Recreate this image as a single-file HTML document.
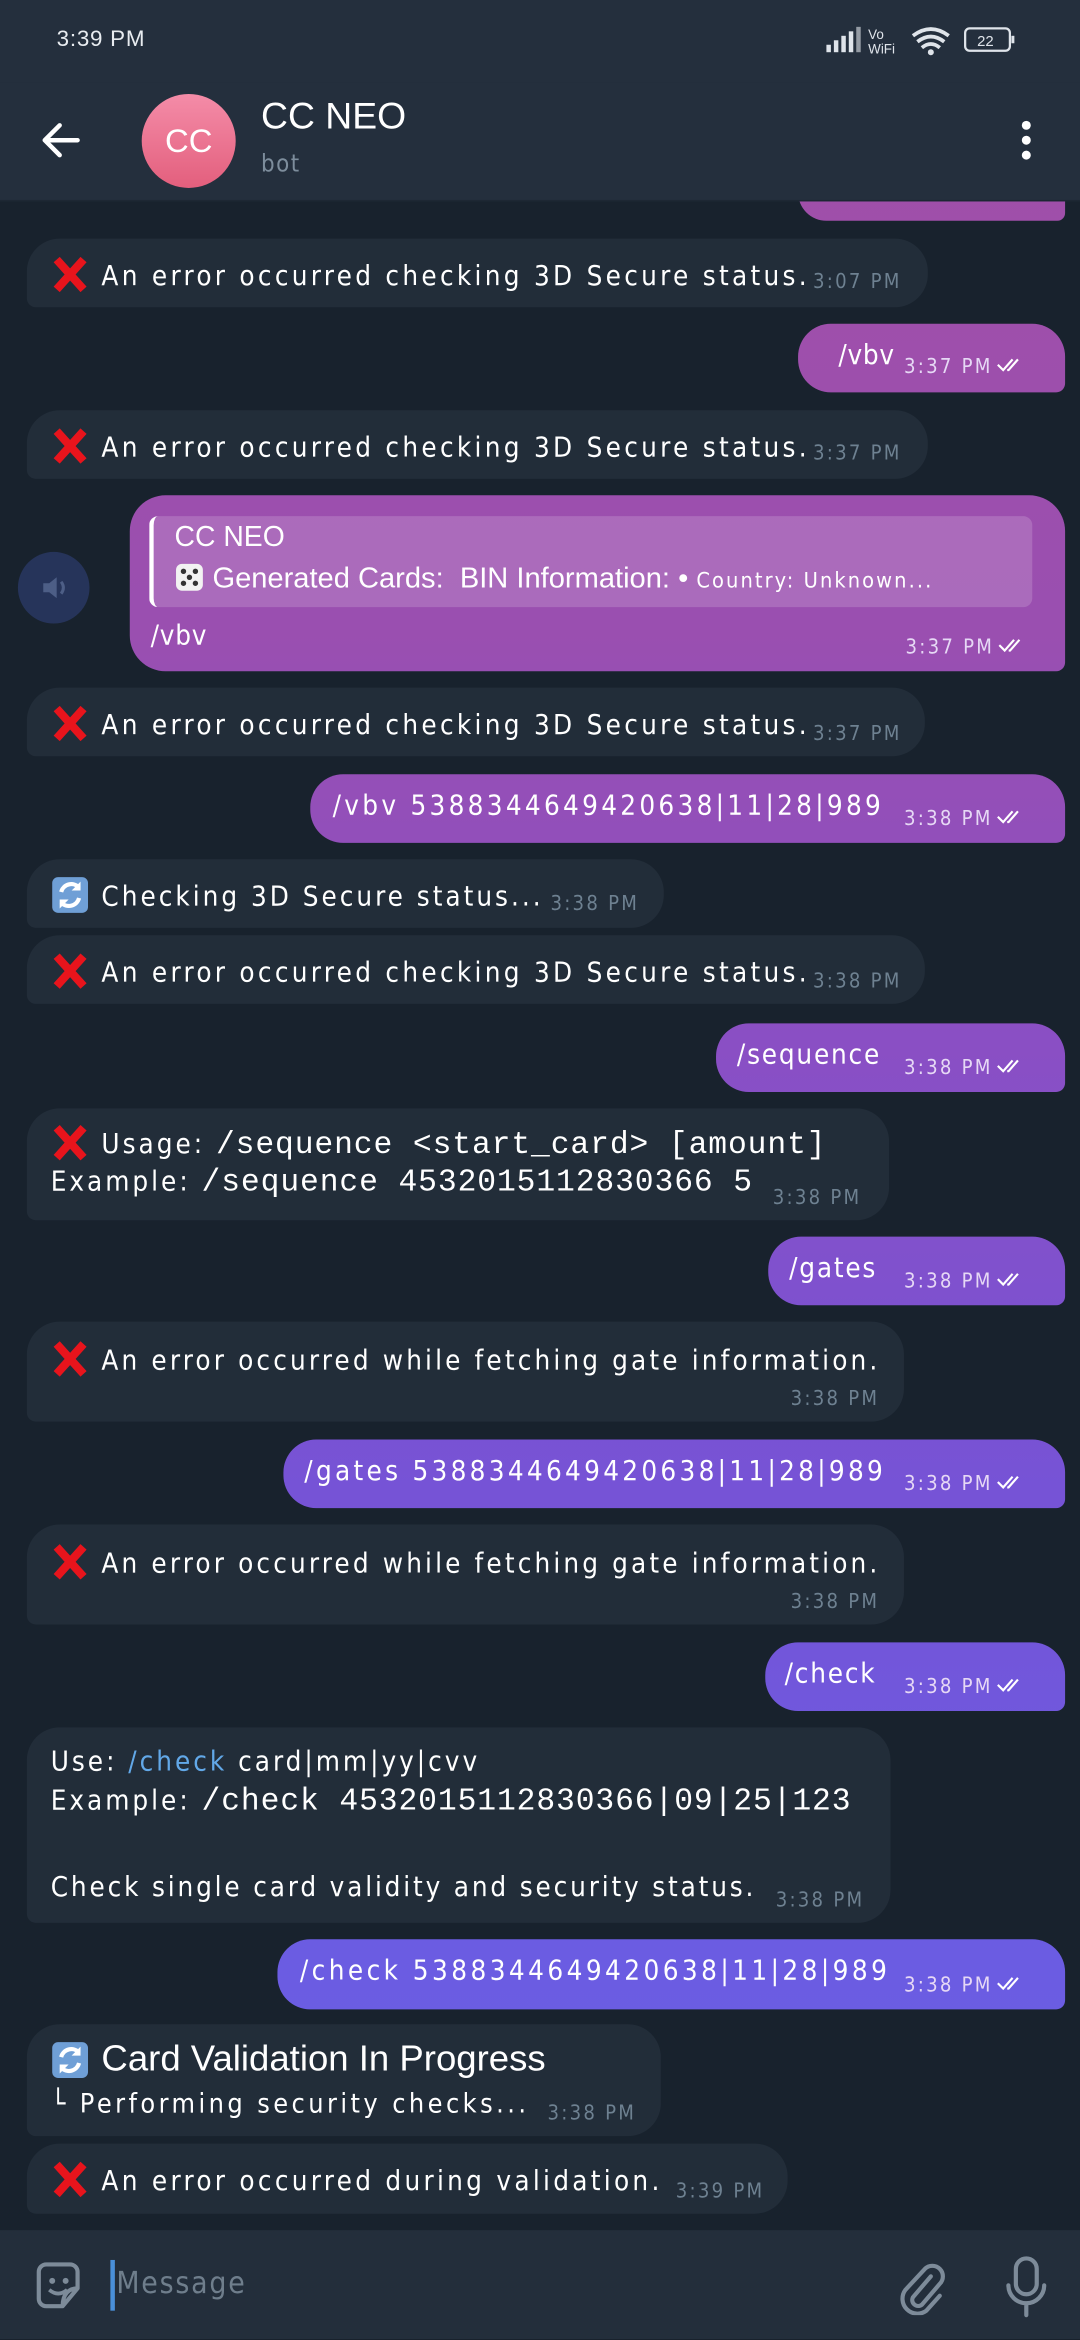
<!DOCTYPE html>
<html><head><meta charset="utf-8"><style>
*{margin:0;padding:0;box-sizing:border-box}
html,body{width:1080px;height:2340px;overflow:hidden;background:#18222d}
#w{position:absolute;left:0;top:0;width:724px;height:1568px;transform:scale(1.49172);transform-origin:0 0;font-family:"DejaVu Sans Condensed","Liberation Sans Narrow","Liberation Sans",sans-serif;color:#fff;background:#18222d}
.sb{position:absolute;left:0;top:0;width:724px;height:55px;background:#242f3d}
.hd{position:absolute;left:0;top:55px;width:724px;height:80px;background:#242f3d}
.b{position:absolute;height:46px;border-radius:22px;font-size:18.5px;letter-spacing:2px;white-space:nowrap}
.i{background:#222d39;left:18px;border-bottom-left-radius:6px}
.o{right:10px;border-bottom-right-radius:6px;background:linear-gradient(180deg,#a24fa6 0,#9a4fb0 420px,#8a4fc4 700px,#7653d6 1000px,#6b5ce2 1300px,#6a60e4 1568px);background-size:724px 1568px}
.t{position:absolute;font-size:13.5px;letter-spacing:1.5px;color:#6e8191}
.o .t{color:#e6d8f5}
.tx{position:absolute;left:16px;top:11px}
.x{display:inline-block;width:26px;height:26px;vertical-align:-6px;margin-right:8px}
.mono{font-family:"Liberation Mono",monospace;letter-spacing:.6px;font-size:21px}
.ck{width:18px;height:11px;display:inline-block;margin-left:3px}
.lg{letter-spacing:2.2px}
</style></head><body><div id="w">
<div class="b o" style="left:535px;top:110px;height:38px;background-position:-535px -110px"></div>
<div class="sb"></div>
<div class="hd"></div>
<div style="position:absolute;left:0;top:134px;width:724px;height:1px;background:#1d2733"></div>
<div style="position:absolute;left:38px;top:18px;font-size:15px;font-family:'Liberation Sans',sans-serif;color:#e8ecf0;letter-spacing:.5px">3:39 PM</div>
<svg style="position:absolute;left:552px;top:16px" width="132" height="22" viewBox="0 0 132 22">
<g fill="#dfe4ea"><rect x="2" y="14" width="3" height="5"/><rect x="7" y="11" width="3" height="8"/><rect x="12" y="8" width="3" height="11"/><rect x="17" y="5" width="3" height="14"/><rect x="22" y="2" width="3" height="17" opacity=".6"/></g>
<text x="30" y="10" font-size="9" fill="#dfe4ea" font-family="Liberation Sans">Vo</text><text x="30" y="20" font-size="9" fill="#dfe4ea" font-family="Liberation Sans">WiFi</text>
<path d="M60 8 Q72 -1 84 8 M63 12 Q72 5 81 12 M66 16 Q72 11 78 16" stroke="#dfe4ea" stroke-width="2.5" fill="none"/><circle cx="72" cy="19" r="2" fill="#dfe4ea"/>
<rect x="95" y="3" width="30" height="15" rx="3" stroke="#dfe4ea" stroke-width="1.5" fill="none"/><rect x="126" y="8" width="2" height="5" fill="#dfe4ea"/><text x="103" y="15" font-size="10" fill="#dfe4ea" font-family="Liberation Sans">22</text></svg>
<svg style="position:absolute;left:27px;top:81px" width="28" height="26" viewBox="0 0 28 26"><path d="M25 13H4M13 3L3 13l10 10" stroke="#fff" stroke-width="3" fill="none" stroke-linecap="round" stroke-linejoin="round"/></svg>
<div style="position:absolute;left:95px;top:63px;width:63px;height:63px;border-radius:50%;background:linear-gradient(180deg,#f48ca8,#e35f7d);font-family:'Liberation Sans',sans-serif;font-size:22px;text-align:center;line-height:63px">CC</div>
<div style="position:absolute;left:175px;top:64px;font-family:'Liberation Sans',sans-serif;font-size:25px;font-weight:500">CC NEO</div>
<div style="position:absolute;left:175px;top:100px;font-size:16px;color:#7d8d9c;letter-spacing:1px">bot</div>
<svg style="position:absolute;left:683px;top:80px" width="10" height="28"><circle cx="5" cy="4" r="3" fill="#fff"/><circle cx="5" cy="14" r="3" fill="#fff"/><circle cx="5" cy="24" r="3" fill="#fff"/></svg>

<svg width="0" height="0" style="position:absolute"><defs>
<symbol id="X" viewBox="0 0 26 26"><path d="M4 3L22 23M22 3L4 23" stroke="#e8141c" stroke-width="5.5"/></symbol>
<symbol id="R" viewBox="0 0 26 26"><rect x="1" y="1" width="24" height="24" rx="4" fill="#6f9fd6"/><path d="M7 11a7 7 0 0 1 12-3M19 15a7 7 0 0 1-12 3" stroke="#fff" stroke-width="2.8" fill="none"/><path d="M20 4v6h-6zM6 22v-6h6z" fill="#fff"/></symbol>
<symbol id="C" viewBox="0 0 20 12"><path d="M1 6l4 4 7-8M8 10l1 0 7-8" stroke="#fff" stroke-width="1.6" fill="none"/></symbol>
</defs></svg>

<div class="b i" style="top:160px;width:604px"><span class="tx lg"><svg class="x"><use href="#X"/></svg>An error occurred checking 3D Secure status.</span><span class="t" style="left:527px;top:21px">3:07 PM</span></div>
<div class="b o" style="left:535px;top:217px;width:179px;background-position:-535px -217px"><span class="tx" style="left:27px;letter-spacing:.5px">/vbv</span><span class="t" style="left:71px;top:21px">3:37 PM<svg class="ck"><use href="#C"/></svg></span></div>
<div class="b i" style="top:275px;width:604px"><span class="tx lg"><svg class="x"><use href="#X"/></svg>An error occurred checking 3D Secure status.</span><span class="t" style="left:527px;top:21px">3:37 PM</span></div>

<div style="position:absolute;left:12px;top:370px;width:48px;height:48px;border-radius:50%;background:#26345a"><svg width="48" height="48" viewBox="0 0 48 48"><path d="M17 21h4l5-4v14l-5-4h-4z" fill="#4d5e86"/><path d="M29 20q3 4 0 8" stroke="#4d5e86" stroke-width="2" fill="none"/></svg></div>
<div class="b o" style="left:87px;top:332px;width:627px;height:118px;border-radius:24px;border-bottom-right-radius:6px;background-position:-87px -332px">
<div style="position:absolute;left:13px;top:14px;width:592px;height:61px;border-radius:6px;background:rgba(255,255,255,.16);border-left:3px solid #fff"></div>
<div style="position:absolute;left:30px;top:18px;font-family:'Liberation Sans',sans-serif;font-size:19px;letter-spacing:0">CC NEO</div>
<div style="position:absolute;left:30px;top:45px;font-family:'Liberation Sans',sans-serif;font-size:19.5px;letter-spacing:0"><svg width="20" height="20" style="vertical-align:-3px"><rect x="1" y="1" width="18" height="18" rx="4" fill="#f2f2f2"/><circle cx="6" cy="6" r="1.8" fill="#333"/><circle cx="14" cy="14" r="1.8" fill="#333"/><circle cx="10" cy="10" r="1.8" fill="#333"/><circle cx="14" cy="6" r="1.8" fill="#333"/><circle cx="6" cy="14" r="1.8" fill="#333"/></svg> Generated Cards:&nbsp; BIN Information: • <span style="font-family:'DejaVu Sans Condensed',sans-serif;font-size:14.5px;letter-spacing:1.4px">Country: Unknown...</span></div>
<span class="tx" style="left:14px;top:84px;letter-spacing:.5px">/vbv</span><span class="t" style="left:520px;top:94px">3:37 PM<svg class="ck"><use href="#C"/></svg></span></div>

<div class="b i" style="top:461px;width:602px"><span class="tx lg"><svg class="x"><use href="#X"/></svg>An error occurred checking 3D Secure status.</span><span class="t" style="left:527px;top:23px">3:37 PM</span></div>
<div class="b o" style="left:208px;top:519px;width:506px;background-position:-208px -519px"><span class="tx" style="left:15px;letter-spacing:2.2px">/vbv 5388344649420638|11|28|989</span><span class="t" style="left:398px;top:22px">3:38 PM<svg class="ck"><use href="#C"/></svg></span></div>
<div class="b i" style="top:576px;width:427px"><span class="tx"><svg class="x"><use href="#R"/></svg>Checking 3D Secure status...</span><span class="t" style="left:351px;top:22px">3:38 PM</span></div>
<div class="b i" style="top:627px;width:602px"><span class="tx lg"><svg class="x"><use href="#X"/></svg>An error occurred checking 3D Secure status.</span><span class="t" style="left:527px;top:23px">3:38 PM</span></div>
<div class="b o" style="left:480px;top:686px;width:234px;background-position:-480px -686px"><span class="tx" style="left:14px;letter-spacing:1.2px">/sequence</span><span class="t" style="left:126px;top:22px">3:38 PM<svg class="ck"><use href="#C"/></svg></span></div>
<div class="b i" style="top:743px;width:578px;height:75px"><span class="tx" style="top:10px"><svg class="x"><use href="#X"/></svg>Usage: <span class="mono">/sequence &lt;start_card&gt; [amount]</span></span><span class="tx" style="top:39px">Example: <span class="mono">/sequence 4532015112830366 5</span></span><span class="t" style="left:500px;top:52px">3:38 PM</span></div>
<div class="b o" style="left:515px;top:829px;width:199px;background-position:-515px -829px"><span class="tx" style="left:14px;letter-spacing:1.2px">/gates</span><span class="t" style="left:91px;top:22px">3:38 PM<svg class="ck"><use href="#C"/></svg></span></div>
<div class="b i" style="top:886px;width:588px;height:67px"><span class="tx" style="top:12px;letter-spacing:2.1px"><svg class="x"><use href="#X"/></svg>An error occurred while fetching gate information.</span><span class="t" style="left:512px;top:44px">3:38 PM</span></div>
<div class="b o" style="left:190px;top:965px;width:524px;background-position:-190px -965px"><span class="tx" style="left:14px;letter-spacing:2.2px">/gates 5388344649420638|11|28|989</span><span class="t" style="left:416px;top:22px">3:38 PM<svg class="ck"><use href="#C"/></svg></span></div>
<div class="b i" style="top:1022px;width:588px;height:67px"><span class="tx" style="top:12px;letter-spacing:2.1px"><svg class="x"><use href="#X"/></svg>An error occurred while fetching gate information.</span><span class="t" style="left:512px;top:44px">3:38 PM</span></div>
<div class="b o" style="left:513px;top:1101px;width:201px;background-position:-513px -1101px"><span class="tx" style="left:13px;letter-spacing:1.2px">/check</span><span class="t" style="left:93px;top:22px">3:38 PM<svg class="ck"><use href="#C"/></svg></span></div>
<div class="b i" style="top:1158px;width:579px;height:131px"><span class="tx" style="top:13px">Use: <span style="color:#62a8e8">/check</span> card|mm|yy|cvv</span><span class="tx" style="top:39px">Example: <span class="mono" style="font-size:21px">/check 4532015112830366|09|25|123</span></span><span class="tx" style="top:97px;letter-spacing:1.9px">Check single card validity and security status.</span><span class="t" style="left:502px;top:108px">3:38 PM</span></div>
<div class="b o" style="left:186px;top:1300px;width:528px;height:47px;background-position:-186px -1300px"><span class="tx" style="left:15px;letter-spacing:2.3px">/check 5388344649420638|11|28|989</span><span class="t" style="left:420px;top:23px">3:38 PM<svg class="ck"><use href="#C"/></svg></span></div>
<div class="b i" style="top:1357px;width:425px;height:75px"><span class="tx" style="top:10px;font-family:'Liberation Sans',sans-serif;font-size:24.5px;letter-spacing:0"><svg class="x"><use href="#R"/></svg>Card Validation In Progress</span><span class="tx" style="top:43px;font-size:18px;letter-spacing:2.3px">└ Performing security checks...</span><span class="t" style="left:349px;top:52px">3:38 PM</span></div>
<div class="b i" style="top:1437px;width:510px;height:47px"><span class="tx lg"><svg class="x"><use href="#X"/></svg>An error occurred during validation.</span><span class="t" style="left:435px;top:24px">3:39 PM</span></div>

<div style="position:absolute;left:0;top:1495px;width:724px;height:73px;background:#232e3b"></div>
<svg style="position:absolute;left:22px;top:1514px" width="36" height="36" viewBox="0 0 36 36"><path d="M30 20V9a5 5 0 0 0-5-5H9a5 5 0 0 0-5 5v18a5 5 0 0 0 5 5h11zM30 20c-6 0-10 4-10 12" stroke="#7d8b99" stroke-width="2.8" fill="none" stroke-linejoin="round"/><circle cx="13" cy="15" r="2" fill="#7d8b99"/><circle cx="22" cy="15" r="2" fill="#7d8b99"/><path d="M11 21q6 5 12 0" stroke="#7d8b99" stroke-width="2.5" fill="none"/></svg>
<div style="position:absolute;left:74px;top:1515px;width:3px;height:34px;background:#4a90d9"></div>
<div style="position:absolute;left:78px;top:1518px;font-size:20px;color:#6f7e8c;letter-spacing:1.2px">Message</div>
<svg style="position:absolute;left:600px;top:1514px" width="34" height="38" viewBox="0 0 34 38"><path d="M24 12L12 26a4 4 0 0 0 6 5l12-14a7 7 0 0 0-10-10L7 21a10 10 0 0 0 14 14l9-10" stroke="#7d8b99" stroke-width="2.8" fill="none" stroke-linecap="round"/></svg>
<svg style="position:absolute;left:672px;top:1512px" width="32" height="42" viewBox="0 0 32 42"><rect x="9" y="2" width="14" height="24" rx="7" stroke="#7d8b99" stroke-width="2.8" fill="none"/><path d="M4 20a12 12 0 0 0 24 0M16 32v8" stroke="#7d8b99" stroke-width="2.8" fill="none" stroke-linecap="round"/></svg>
</div></body></html>
